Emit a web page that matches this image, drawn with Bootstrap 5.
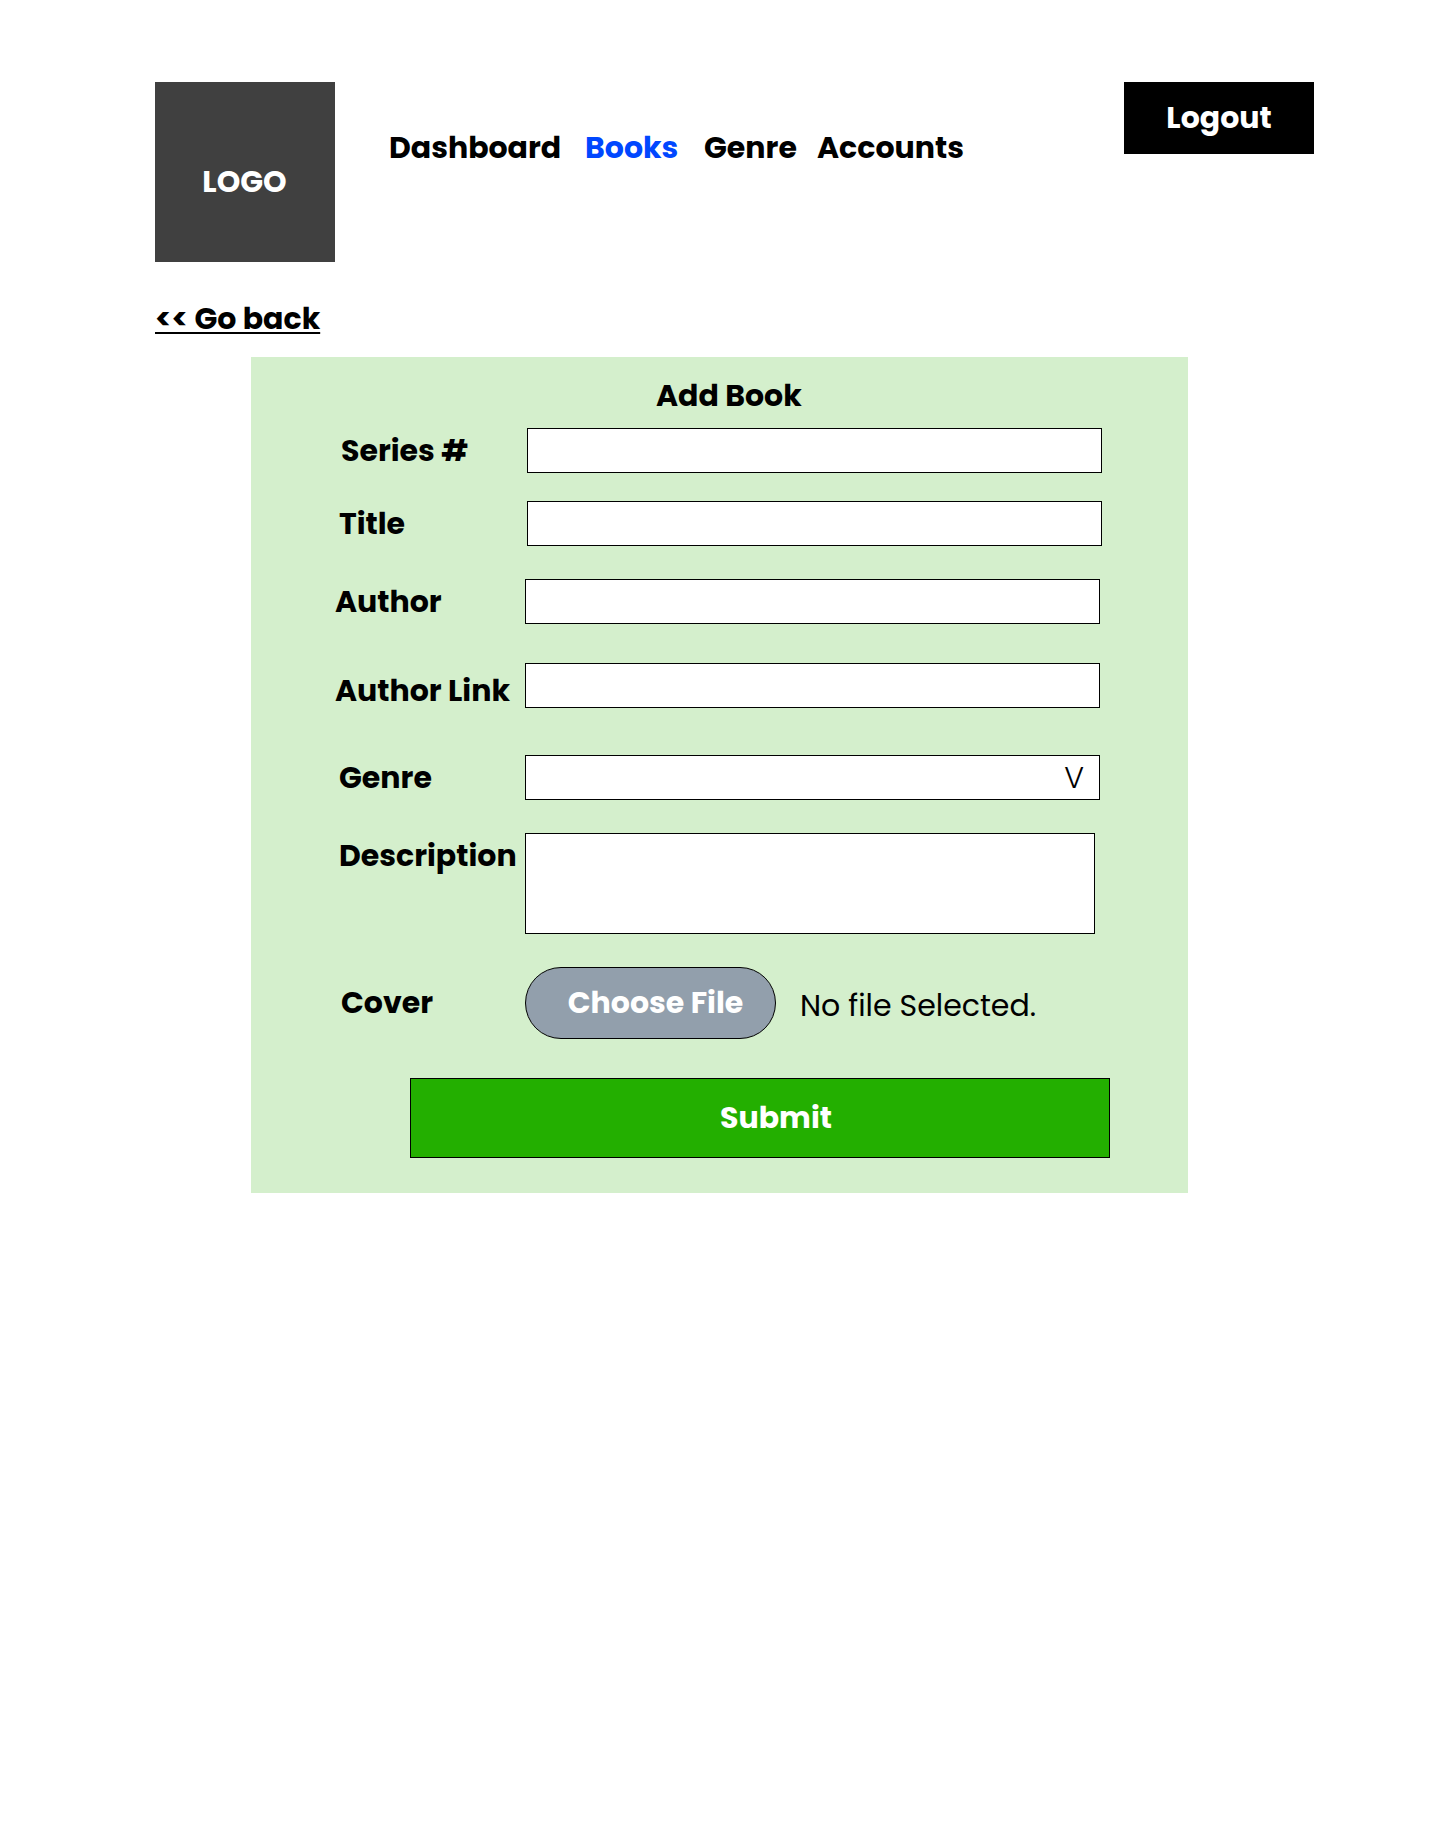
<!DOCTYPE html>
<html lang="en">
<head>
<meta charset="utf-8">
<meta name="viewport" content="width=device-width, initial-scale=1">
<title>Add Book</title>
<link href="https://cdn.jsdelivr.net/npm/bootstrap@5.3.0/dist/css/bootstrap.min.css" rel="stylesheet">
<style>
body { font-family: Poppins, Inter, "Open Sans", sans-serif; font-size: 30px; line-height: 45px; color: #000; background: #fff; min-height: 1843px; }
.page-head { padding: 82px 126px 0 155px; }
.logo-box { width: 180px; height: 180px; background: #404040; padding: 77px 1px 0 0; }
.main-nav { margin: 43px 0 0 54px; }
.main-nav .nav-link { padding: 0; color: #000; white-space: nowrap; }
.main-nav .nav-link.active { color: #0047ff; }
.nav-w1 { width: 196px; } .nav-w2 { width: 119px; } .nav-w3 { width: 113px; }
.btn-logout { width: 190px; height: 72px; background: #000; color: #fff; }
.btn-logout, .btn-submit, .btn-file { font-size: 30px; line-height: 45px; padding: 0 0 2px; }
.back-link { display: inline-block; margin: 34px 0 0 155px; color: #000; text-decoration-thickness: 1.5px; text-underline-offset: 3px; }
.book-form { width: 937px; height: 836px; margin: 16px 0 0 251px; padding: 16px 0 0 84px; background: #d4efcc; }
.form-heading { font-size: 30px; line-height: 45px; margin: 0 0 10px 321px; }
.field-label { flex: none; width: 190px; white-space: nowrap; }
.label-wide { width: 192px; }
.in-4 { padding-left: 4px; } .in-6 { padding-left: 6px; }
.label-low { padding-top: 5px; }
.label-high { padding-bottom: 2px; }
.book-form .form-control, .book-form .form-select { width: 575px; height: 45px; border: 1px solid #000; border-radius: 0; background: #fff; color: #000; padding: 0 15px; }
.book-form textarea.form-control { width: 570px; height: 101px; resize: none; }
.gap-a { margin-bottom: 28px; } .gap-b { margin-bottom: 33px; } .gap-c { margin-bottom: 39px; } .gap-d { margin-bottom: 42px; }
.drop-mark { font-size: 30px; line-height: 43px; font-weight: 300; }
.btn-file { width: 251px; height: 72px; border: 1px solid #000; border-radius: 36px; background: #929fac; color: #fff; padding-left: 10px; }
.file-note { margin: 5px 0 0 24px; }
.btn-submit { width: 700px; height: 80px; margin-left: 75px; border: 1px solid #000; border-radius: 0; background: #23af00; color: #fff; padding-left: 32px; }
</style>
</head>
<body>
<header class="page-head d-flex align-items-start">
  <div class="logo-box text-white fw-bold text-center">LOGO</div>
  <nav class="main-nav nav flex-nowrap fw-bold">
    <a class="nav-link nav-w1" href="#">Dashboard</a>
    <a class="nav-link nav-w2 active" href="#">Books</a>
    <a class="nav-link nav-w3" href="#">Genre</a>
    <a class="nav-link" href="#">Accounts</a>
  </nav>
  <button class="btn btn-logout rounded-0 border-0 fw-bold ms-auto" type="button">Logout</button>
</header>
<main>
  <a class="back-link fw-bold" href="#">&lt;&lt; Go back</a>
  <form class="book-form">
    <h1 class="form-heading fw-bold">Add Book</h1>
    <div class="d-flex gap-a">
      <label class="field-label label-wide in-6 fw-bold" for="series">Series #</label>
      <input class="form-control" id="series" type="text">
    </div>
    <div class="d-flex gap-b">
      <label class="field-label label-wide in-4 fw-bold" for="title">Title</label>
      <input class="form-control" id="title" type="text">
    </div>
    <div class="d-flex gap-c">
      <label class="field-label fw-bold" for="author">Author</label>
      <input class="form-control" id="author" type="text">
    </div>
    <div class="d-flex gap-d">
      <label class="field-label label-low fw-bold" for="link">Author Link</label>
      <input class="form-control" id="link" type="text">
    </div>
    <div class="d-flex gap-b">
      <label class="field-label in-4 fw-bold">Genre</label>
      <div class="form-select d-flex justify-content-end align-items-center" role="combobox" tabindex="0"><span class="drop-mark">V</span></div>
    </div>
    <div class="d-flex gap-b">
      <label class="field-label in-4 fw-bold" for="desc">Description</label>
      <textarea class="form-control" id="desc"></textarea>
    </div>
    <div class="d-flex align-items-center gap-c">
      <span class="field-label label-high in-6 fw-bold">Cover</span>
      <button class="btn btn-file fw-bold" type="button">Choose File</button>
      <span class="file-note">No file Selected.</span>
    </div>
    <button class="btn btn-submit fw-bold" type="button">Submit</button>
  </form>
</main>
<script src="https://cdn.jsdelivr.net/npm/bootstrap@5.3.0/dist/js/bootstrap.bundle.min.js"></script>
</body>
</html>
